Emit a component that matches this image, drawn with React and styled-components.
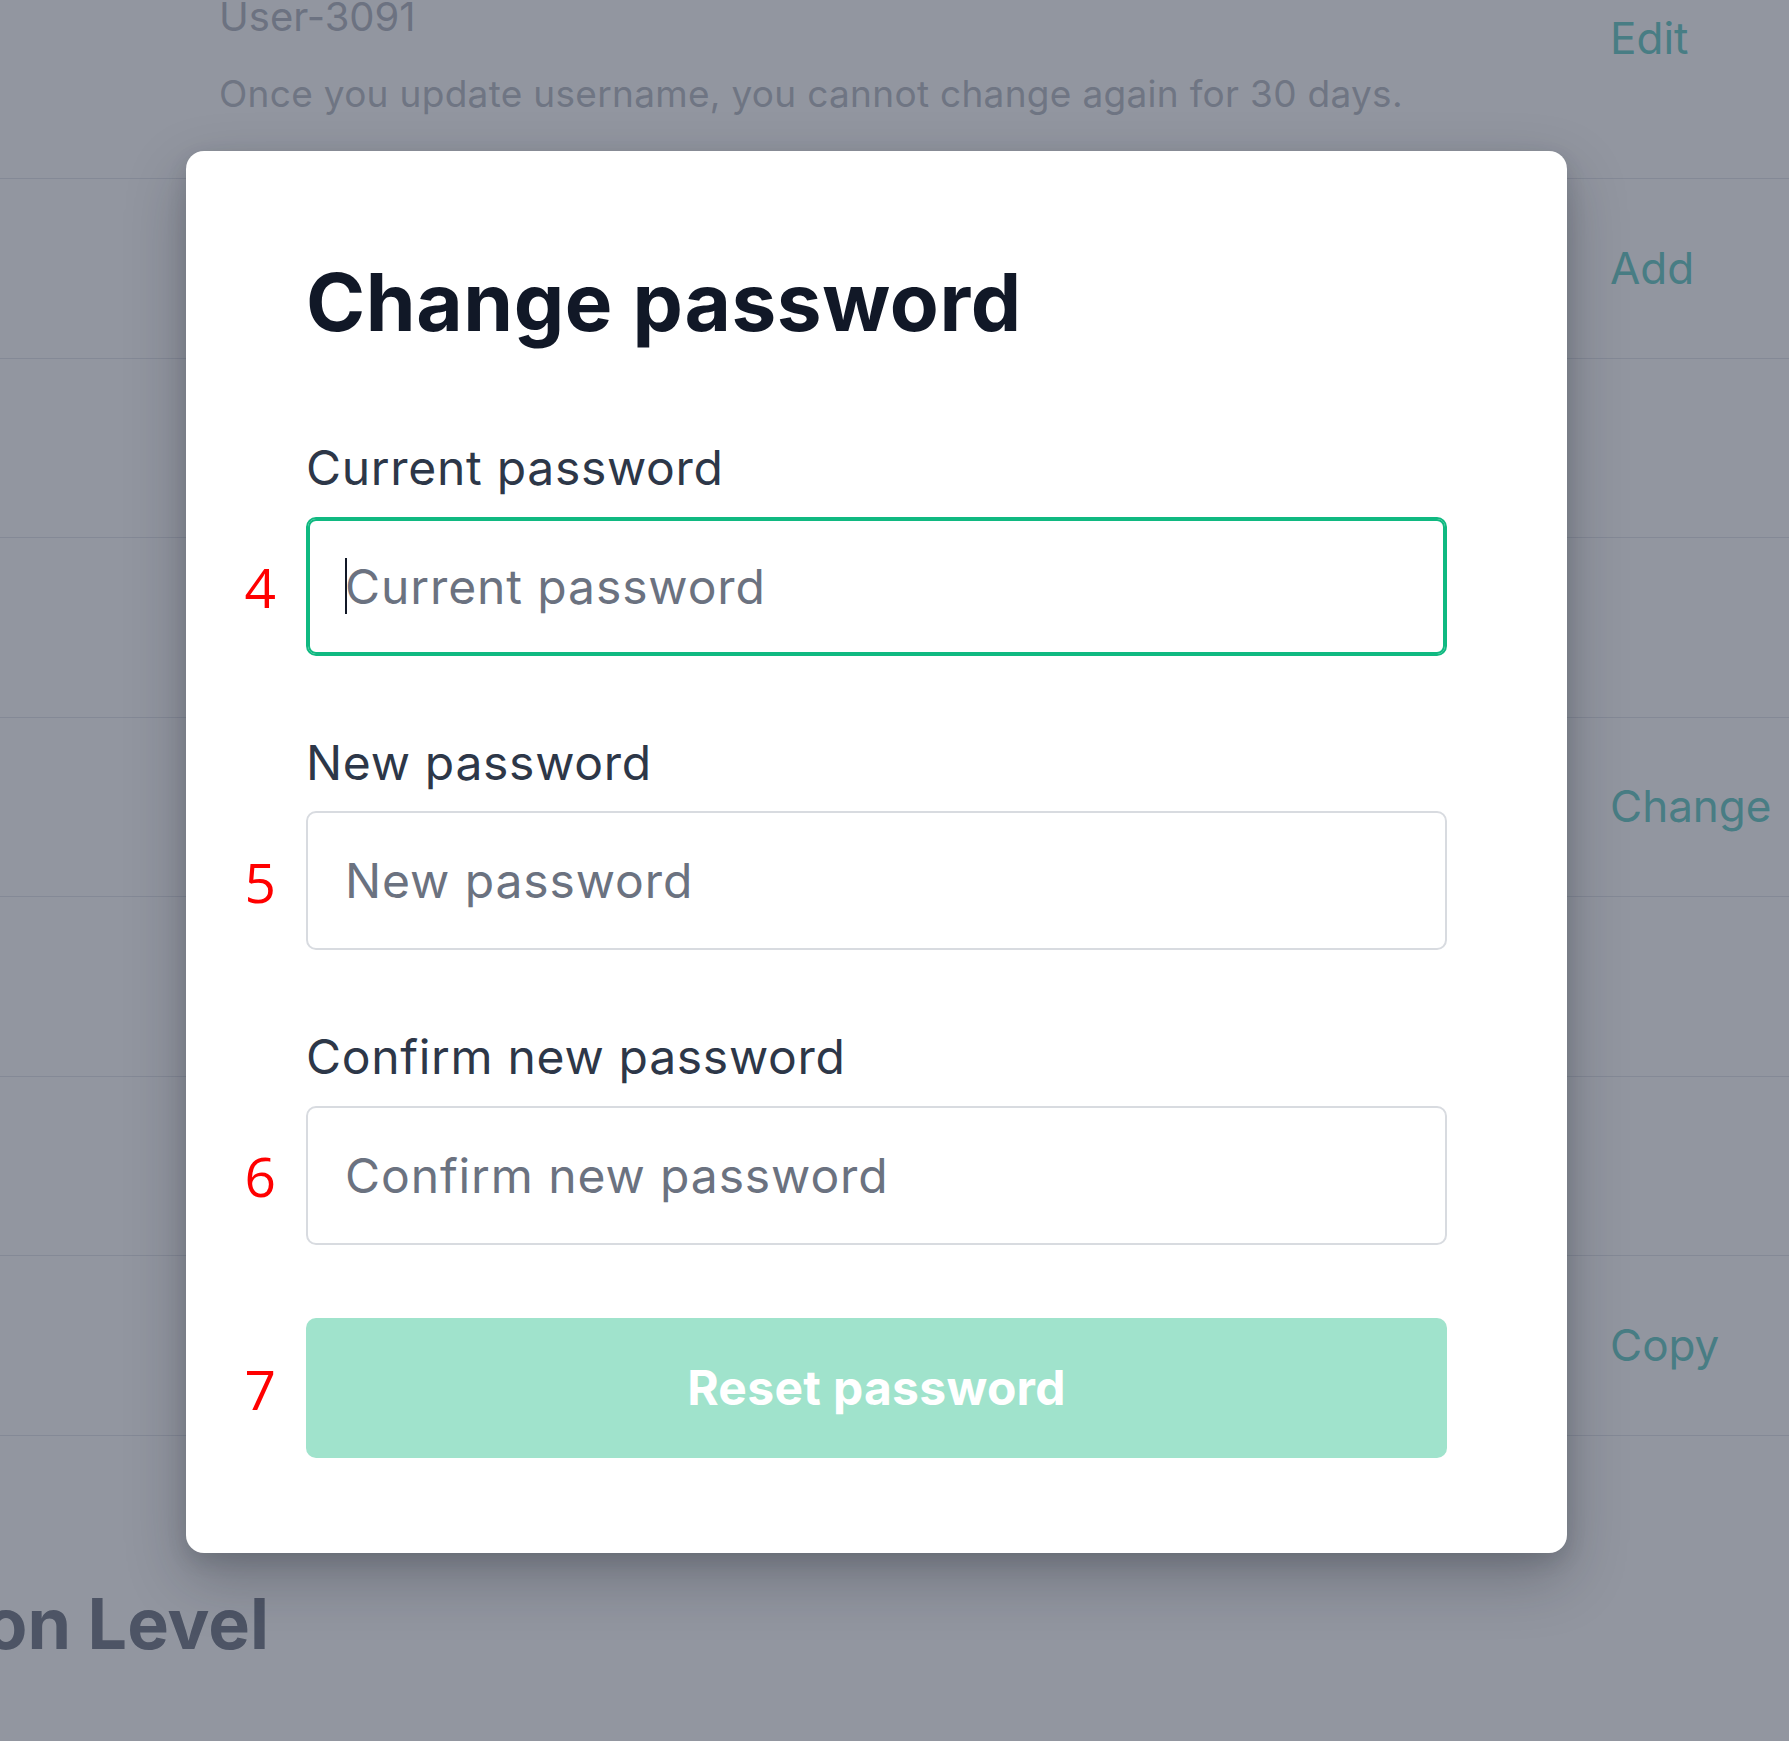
import React from 'react';
import styled, { createGlobalStyle } from 'styled-components';

const GlobalStyle = createGlobalStyle`
  html, body {
    margin: 0;
    padding: 0;
    width: 1789px;
    height: 1741px;
    overflow: hidden;
    background: #ffffff;
    font-family: Inter, "Noto Sans", sans-serif;
  }
  * { box-sizing: border-box; }
`;

const Page = styled.div`
  position: relative;
  width: 1789px;
  height: 1741px;
  overflow: hidden;
  background: #ffffff;
`;

const SettingsList = styled.div`
  margin-top: -7px;
`;

const SettingRow = styled.div`
  display: flex;
  align-items: ${(p) => (p.$first ? 'flex-start' : 'center')};
  height: ${(p) => (p.$first ? '186px' : '179.5px')};
  padding-left: 219px;
  border-bottom: 1px solid #e3e5ea;
`;

const RowText = styled.div`
  flex: 1;
  display: flex;
  flex-direction: column;
`;

const RowTitle = styled.div`
  font-size: 40px;
  line-height: 48px;
  color: #b3b7c0;
`;

const RowHint = styled.div`
  margin-top: 25px;
  font-size: 37px;
  line-height: 55px;
  letter-spacing: 0.3px;
  color: #b8bcc4;
`;

const RowAction = styled.div`
  width: 179px;
  margin-top: ${(p) => p.$offset || 0}px;
  font-size: 44px;
  line-height: 53px;
  color: #6accc6;
`;

const SectionHeading = styled.div`
  display: flex;
  justify-content: flex-end;
  width: 269px;
  margin-top: 146px;
  font-size: 70px;
  line-height: 84px;
  font-weight: 700;
  color: #747b88;
  white-space: nowrap;
`;

const Overlay = styled.div`
  position: absolute;
  inset: 0;
  display: flex;
  align-items: flex-start;
  padding: 151px 0 0 186px;
  background: rgba(38, 45, 66, 0.5);
`;

const Dialog = styled.div`
  width: 1381px;
  padding: 103px 120px 95px;
  background: #ffffff;
  border-radius: 18px;
  box-shadow: 0 24px 60px rgba(20, 24, 36, 0.28), 0 8px 20px rgba(20, 24, 36, 0.12);
  display: flex;
  flex-direction: column;
`;

const Title = styled.h2`
  margin: 0 0 89px;
  font-size: 80px;
  line-height: 96px;
  font-weight: 700;
  color: #111827;
  letter-spacing: 0.6px;
`;

const Form = styled.form`
  display: flex;
  flex-direction: column;
  gap: 78px;
  margin: 0;
`;

const Field = styled.label`
  display: flex;
  flex-direction: column;
  gap: 20px;
`;

const LabelText = styled.span`
  font-size: 48px;
  line-height: 57.6px;
  font-weight: 400;
  letter-spacing: 0.7px;
  color: #2d3748;
`;

const InputWrap = styled.div`
  position: relative;
`;

const Input = styled.input`
  display: block;
  width: 100%;
  height: 139px;
  padding: 0 37px;
  border: 2px solid ${(p) => (p.$focused ? '#10b981' : '#d8dbe0')};
  box-shadow: ${(p) => (p.$focused ? 'inset 0 0 0 2px #10b981' : 'none')};
  border-radius: 10px;
  background: #ffffff;
  font-family: Inter, "Noto Sans", sans-serif;
  font-size: 48px;
  letter-spacing: 0.9px;
  color: #111827;
  outline: none;

  &::placeholder {
    color: #6b7280;
    opacity: 1;
  }
`;

const Caret = styled.span`
  position: absolute;
  left: 39px;
  top: 41px;
  width: 2px;
  height: 56px;
  background: #111827;
`;

const Marker = styled.span`
  position: absolute;
  right: calc(100% + 30px);
  top: 50%;
  transform: translateY(-50%);
  font-family: "Open Sans", "Noto Sans", sans-serif;
  font-size: 55px;
  line-height: 1;
  color: #ff0000;
`;

const SubmitWrap = styled.div`
  position: relative;
  margin-top: -5px;
`;

const SubmitButton = styled.button`
  display: block;
  width: 100%;
  height: 140px;
  border: none;
  border-radius: 10px;
  background: #a0e3cc;
  color: #ffffff;
  font-family: Inter, "Noto Sans", sans-serif;
  font-size: 48px;
  font-weight: 700;
  letter-spacing: 0.3px;
  cursor: not-allowed;
`;

const fields = [
  { label: 'Current password', marker: '4', focused: true },
  { label: 'New password', marker: '5' },
  { label: 'Confirm new password', marker: '6' },
];

export default function App() {
  return (
    <>
      <GlobalStyle />
      <Page>
        <SettingsList>
          <SettingRow $first>
            <RowText>
              <RowTitle>User-3091</RowTitle>
              <RowHint>Once you update username, you cannot change again for 30 days.</RowHint>
            </RowText>
            <RowAction $offset={19}>Edit</RowAction>
          </SettingRow>
          <SettingRow>
            <RowText />
            <RowAction>Add</RowAction>
          </SettingRow>
          <SettingRow />
          <SettingRow />
          <SettingRow>
            <RowText />
            <RowAction>Change</RowAction>
          </SettingRow>
          <SettingRow />
          <SettingRow />
          <SettingRow>
            <RowText />
            <RowAction>Copy</RowAction>
          </SettingRow>
        </SettingsList>
        <SectionHeading>
          <span>Verification Level</span>
        </SectionHeading>

        <Overlay>
          <Dialog role="dialog" aria-labelledby="change-password-title">
            <Title id="change-password-title">Change password</Title>
            <Form onSubmit={(e) => e.preventDefault()}>
              {fields.map((f) => (
                <Field key={f.label}>
                  <LabelText>{f.label}</LabelText>
                  <InputWrap>
                    <Marker>{f.marker}</Marker>
                    <Input type="password" placeholder={f.label} $focused={f.focused} />
                    {f.focused && <Caret />}
                  </InputWrap>
                </Field>
              ))}
              <SubmitWrap>
                <Marker>7</Marker>
                <SubmitButton type="submit">Reset password</SubmitButton>
              </SubmitWrap>
            </Form>
          </Dialog>
        </Overlay>
      </Page>
    </>
  );
}
